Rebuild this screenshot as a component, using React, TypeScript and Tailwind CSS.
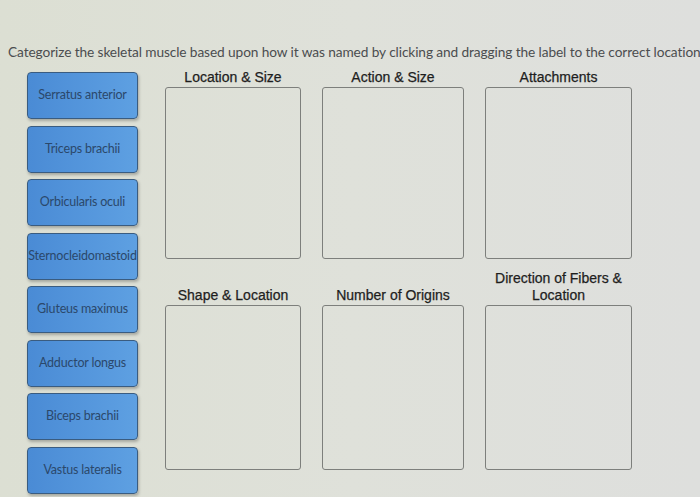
import React from "react";

const labels = [
  "Serratus anterior",
  "Triceps brachii",
  "Orbicularis oculi",
  "Sternocleidomastoid",
  "Gluteus maximus",
  "Adductor longus",
  "Biceps brachii",
  "Vastus lateralis",
];

function Zone({ title, w, h, headerH }: { title: string; w: string; h: string; headerH: string }) {
  return (
    <div className={`flex flex-col ${w}`}>
      <div className={`flex items-end justify-center text-center ${headerH} pb-[1px]`}>
        <span className="text-[14px] leading-[17px] text-[#1e1e1e] [font-family:'Liberation_Sans',Arial,sans-serif] [-webkit-text-stroke:0.25px_#1e1e1e]">
          {title}
        </span>
      </div>
      <div className={`${h} rounded-[3px] border border-[#7d7f7c]`} />
    </div>
  );
}

export default function App() {
  return (
    <div className="w-[700px] h-[497px] overflow-hidden bg-linear-to-r from-[#dcdfd3] via-[#dfe1da] to-[#dedfdd] [font-family:Lato,'Liberation_Sans',sans-serif]">
      <p className="pt-[42px] pl-[8px] whitespace-nowrap text-[13.7px] leading-[19px] text-[#4b4d4f] tracking-[-0.1px]">
        Categorize the skeletal muscle based upon how it was named by clicking and dragging the label to the correct location
      </p>
      <div className="flex mt-[9px]">
        <div className="flex flex-col gap-[6.5px] ml-[27px] w-[111px] mt-[2px]">
          {labels.map((l) => (
            <div
              key={l}
              className="h-[47px] rounded-[4px] border border-[#3a5c80] bg-linear-to-r from-[#4a8bd5] to-[#5ea0e2] shadow-[1px_2px_3px_rgba(0,0,0,0.25)] flex items-center justify-center overflow-hidden whitespace-nowrap text-[12.5px] text-[#2b486b] tracking-[-0.2px]"
            >
              {l}
            </div>
          ))}
        </div>
        <div className="ml-[27px] flex flex-col gap-[12px]">
          <div className="flex gap-[21px]">
            <Zone title="Location & Size" w="w-[136px]" h="h-[172px]" headerH="h-[17px]" />
            <Zone title="Action & Size" w="w-[142px]" h="h-[172px]" headerH="h-[17px]" />
            <Zone title="Attachments" w="w-[147px]" h="h-[172px]" headerH="h-[17px]" />
          </div>
          <div className="flex gap-[21px]">
            <Zone title="Shape & Location" w="w-[136px]" h="h-[165px]" headerH="h-[34px]" />
            <Zone title="Number of Origins" w="w-[142px]" h="h-[165px]" headerH="h-[34px]" />
            <Zone title="Direction of Fibers & Location" w="w-[147px]" h="h-[165px]" headerH="h-[34px]" />
          </div>
        </div>
      </div>
    </div>
  );
}
